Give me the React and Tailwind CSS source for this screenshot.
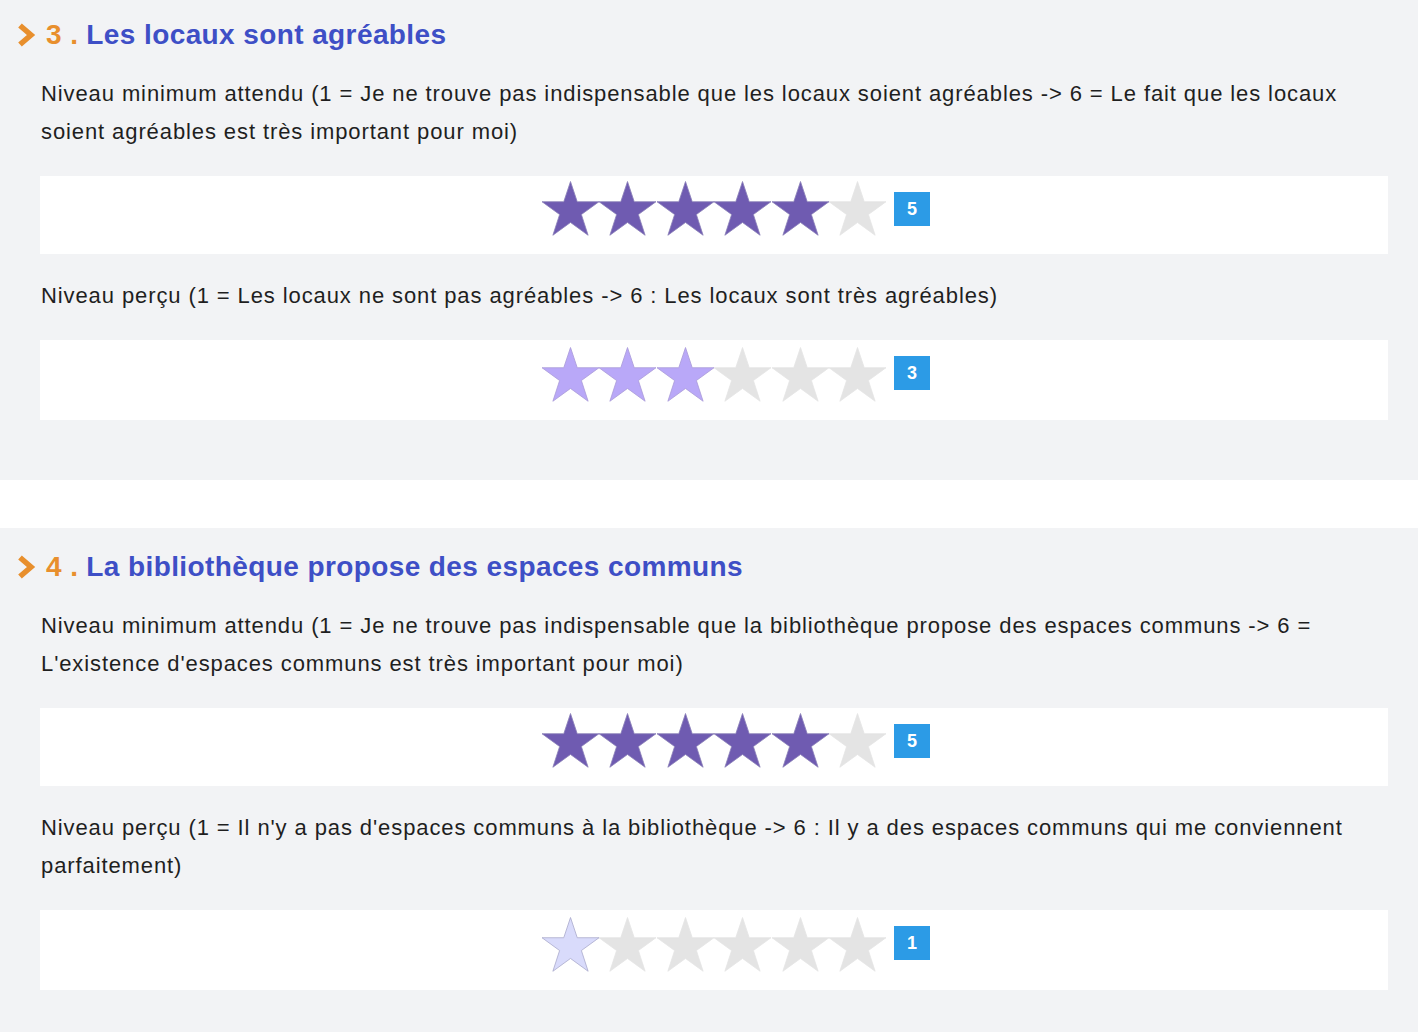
import React from "react";

const STAR_POINTS =
  "28.5,0.5 35.24,20.73 57,20.73 39.4,33.54 46.13,54.27 28.5,41.46 10.87,54.27 17.6,33.54 0,20.73 21.76,20.73";

const FILLS = {
  dark: { fill: "#6f5bb1", stroke: "#8a80b8" },
  light: { fill: "#b9a8f8", stroke: "#a99ad8" },
  pale: { fill: "#d9dbfb", stroke: "#a9aacb" },
  grey: { fill: "#e4e4e4", stroke: "#e4e4e4" },
};

function Star({ kind }) {
  const c = FILLS[kind];
  return (
    <svg width="57" height="56" viewBox="0 0 57 56" className="block shrink-0">
      <polygon points={STAR_POINTS} fill={c.fill} stroke={c.stroke} strokeWidth="0.8" strokeLinejoin="miter" />
    </svg>
  );
}

function Rating({ value, kind, tall }) {
  return (
    <div className={`bg-white ${tall ? "h-[80px] pt-[7px]" : "h-[78px] pt-[5px]"}`}>
      <div className="relative mx-auto w-[344px]">
        <div className="flex justify-between">
          {[1, 2, 3, 4, 5, 6].map((i) => (
            <Star key={i} kind={i <= value ? kind : "grey"} />
          ))}
        </div>
        <div
          className={`absolute left-[352px] ${tall ? "top-[9px]" : "top-[11px]"} w-[36px] h-[34px] bg-[#2c9be6] text-white font-bold text-[18px] flex items-center justify-center`}
          style={{ fontFamily: '"Liberation Sans", Arial, sans-serif' }}
        >
          {value}
        </div>
      </div>
    </div>
  );
}

function Chevron() {
  return (
    <svg width="22" height="26" viewBox="0 0 22 26" className="block">
      <polyline points="4,3.5 15,13 4,22.5" fill="none" stroke="#e88f2d" strokeWidth="5.5" strokeLinecap="butt" strokeLinejoin="miter" />
    </svg>
  );
}

function Section({ num, title, items, first }) {
  return (
    <section className={`bg-[#f2f3f5] ${first ? "-mt-1 pb-[60px]" : "pb-[60px]"} pt-[22px]`}>
      <h2 className="flex items-center h-[34px] pl-[16px] text-[28px] leading-[34px] font-bold tracking-[0.4px]">
        <Chevron />
        <span className="ml-[8px] text-[#e88f2d]">{num} .</span>
        <span className="ml-[8px] text-[#3e4fc6]">{title}</span>
      </h2>
      <div className="pl-[40px] pr-[30px] pt-[23px]">
        {items.map((it, idx) => (
          <div key={idx} className={idx > 0 ? "mt-[23px]" : ""}>
            <p className="text-[22px] leading-[38px] tracking-[0.9px] text-[#1f1f1f] pl-px">{it.text}</p>
            <div className="mt-[25px]">
              <Rating value={it.value} kind={it.kind} tall={it.tall} />
            </div>
          </div>
        ))}
      </div>
    </section>
  );
}

export default function App() {
  return (
    <div
      className="w-[1418px] min-h-[1032px] bg-white overflow-hidden"
      style={{ fontFamily: '"Liberation Sans", Arial, Helvetica, sans-serif' }}
    >
      <Section
        first
        num="3"
        title="Les locaux sont agréables"
        items={[
          {
            text: "Niveau minimum attendu (1 = Je ne trouve pas indispensable que les locaux soient agréables -> 6 = Le fait que les locaux soient agréables est très important pour moi)",
            value: 5,
            kind: "dark",
          },
          {
            text: "Niveau perçu (1 = Les locaux ne sont pas agréables -> 6 : Les locaux sont très agréables)",
            value: 3,
            kind: "light",
            tall: true,
          },
        ]}
      />
      <div className="h-[48px] bg-white" />
      <Section
        num="4"
        title="La bibliothèque propose des espaces communs"
        items={[
          {
            text: "Niveau minimum attendu (1 = Je ne trouve pas indispensable que la bibliothèque propose des espaces communs -> 6 = L'existence d'espaces communs est très important pour moi)",
            value: 5,
            kind: "dark",
          },
          {
            text: "Niveau perçu (1 = Il n'y a pas d'espaces communs à la bibliothèque -> 6 : Il y a des espaces communs qui me conviennent parfaitement)",
            value: 1,
            kind: "pale",
            tall: true,
          },
        ]}
      />
    </div>
  );
}
